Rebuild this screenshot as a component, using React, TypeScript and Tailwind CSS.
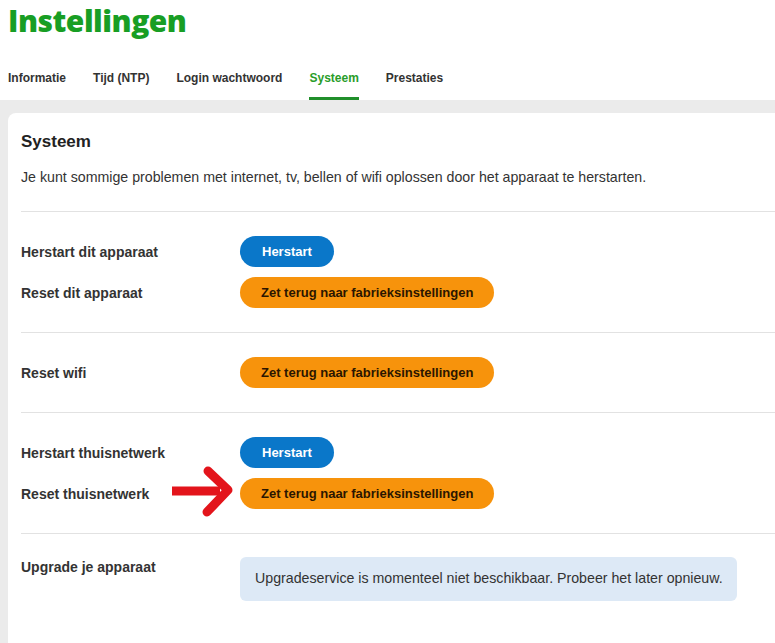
import React from "react";

const tabs = ["Informatie", "Tijd (NTP)", "Login wachtwoord", "Systeem", "Prestaties"];

function Btn({ kind, children }: { kind: "blue" | "orange"; children: React.ReactNode }) {
  const cls =
    kind === "blue"
      ? "bg-[#0a77c9] text-white px-[22px]"
      : "bg-[#f7930c] text-[#2b1600] px-[21px]";
  return (
    <button
      className={`h-[31px] rounded-full text-[13px] font-bold leading-none whitespace-nowrap ${cls}`}
    >
      {children}
    </button>
  );
}

function Row({ label, children }: { label: string; children: React.ReactNode }) {
  return (
    <div className="flex items-center">
      <div className="w-[219px] shrink-0 text-[14px] font-bold leading-[20px] text-[#333]">{label}</div>
      {children}
    </div>
  );
}

function Section({ children }: { children: React.ReactNode }) {
  return <div className="border-t border-[#e2e2e2] pt-6 pb-6 flex flex-col gap-[10px]">{children}</div>;
}

export default function App() {
  return (
    <div className="relative w-[775px] h-[643px] overflow-hidden bg-white font-['Liberation_Sans',Arial,sans-serif]">
      <header className="px-2 pt-[6px]">
        <h1 className="font-['Open_Sans',sans-serif] text-[30px] font-extrabold leading-[30px] tracking-[-0.5px] text-[#189e24]">
          Instellingen
        </h1>
        <nav className="mt-[34px] flex gap-[27px]">
          {tabs.map((t) => (
            <div
              key={t}
              className={`text-[12px] font-bold leading-[16px] pb-[11px] border-b-[3px] ${
                t === "Systeem" ? "text-[#2a9d2a] border-[#208f2a]" : "text-[#333] border-transparent"
              }`}
            >
              {t}
            </div>
          ))}
        </nav>
      </header>
      <div className="bg-[#ebebeb] pl-2 pt-[13px] h-full">
        <div className="bg-white rounded-tl-lg pl-[13px] pt-[19px] h-full">
          <h2 className="text-[17px] font-bold leading-[20px] text-[#222]">Systeem</h2>
          <p className="mt-[15px] text-[14.2px] leading-[20px] text-[#333]">
            Je kunt sommige problemen met internet, tv, bellen of wifi oplossen door het apparaat te herstarten.
          </p>
          <div className="mt-[24px]">
            <Section>
              <Row label="Herstart dit apparaat">
                <Btn kind="blue">Herstart</Btn>
              </Row>
              <Row label="Reset dit apparaat">
                <Btn kind="orange">Zet terug naar fabrieksinstellingen</Btn>
              </Row>
            </Section>
            <Section>
              <Row label="Reset wifi">
                <Btn kind="orange">Zet terug naar fabrieksinstellingen</Btn>
              </Row>
            </Section>
            <Section>
              <Row label="Herstart thuisnetwerk">
                <Btn kind="blue">Herstart</Btn>
              </Row>
              <Row label="Reset thuisnetwerk">
                <Btn kind="orange">Zet terug naar fabrieksinstellingen</Btn>
              </Row>
            </Section>
            <div className="border-t border-[#e2e2e2] pt-[23px] flex items-start">
              <div className="w-[219px] shrink-0 text-[14px] font-bold leading-[20px] text-[#333]">
                Upgrade je apparaat
              </div>
              <div className="w-[497px] h-[44px] flex items-center px-[15px] rounded-md bg-[#dde9f6] text-[14.2px] whitespace-nowrap text-[#333]">
                Upgradeservice is momenteel niet beschikbaar. Probeer het later opnieuw.
              </div>
            </div>
          </div>
        </div>
      </div>
      <svg className="absolute left-[168px] top-[462px]" width="70" height="60" viewBox="0 0 70 60">
        <path d="M4 29 L52 29" stroke="#e3141b" strokeWidth="9" strokeLinecap="butt" />
        <path d="M40 9 L60 28 L39 50" fill="none" stroke="#e3141b" strokeWidth="9" strokeLinecap="round" strokeLinejoin="round" />
      </svg>
    </div>
  );
}
